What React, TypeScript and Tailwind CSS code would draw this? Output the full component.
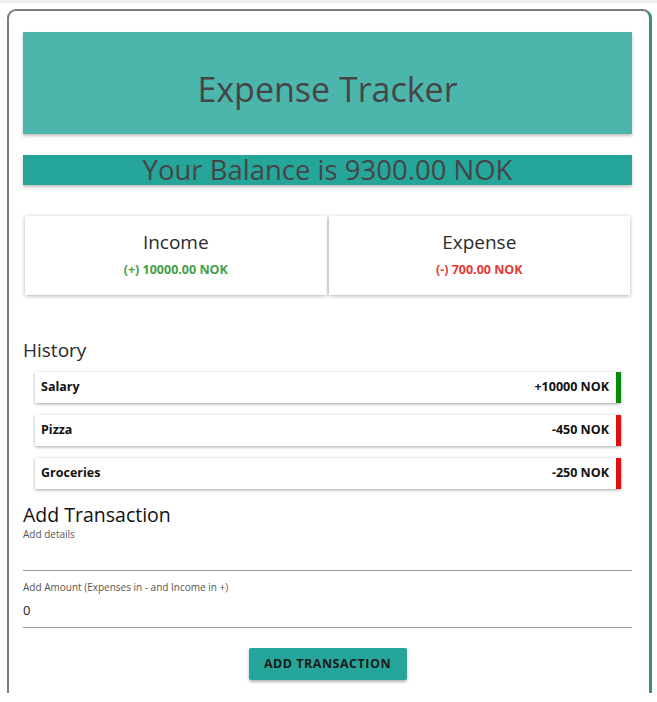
import React from "react";

const rows = [
  { name: "Salary", amount: "+10000 NOK", color: "border-r-[#0a8a0a]" },
  { name: "Pizza", amount: "-450 NOK", color: "border-r-[#e01010]" },
  { name: "Groceries", amount: "-250 NOK", color: "border-r-[#e01010]" },
];

export default function App() {
  return (
    <div className="w-[657px] h-[702px] bg-white overflow-hidden" style={{ fontFamily: '"Open Sans", "Noto Sans", sans-serif' }}>
      <div className="h-[3px] bg-[#eeeeee]" />
      <div className="ml-[7px] mt-[6px] w-[645px] h-[684px] rounded-t-[9px] border-l-2 border-t-2 border-r-[3px] border-l-[#7c7c7c] border-t-[#7c7c7c] border-r-[#3e8a86] pl-[14px] pr-[17px] pt-[21px]">
        <div className="h-[102px] bg-[#4db6ac] shadow-[0_2px_3px_rgba(0,0,0,0.25)] flex items-center justify-center">
          <h1 className="text-[34px] text-[#454545] leading-none mt-[12px]">Expense Tracker</h1>
        </div>
        <div className="mt-[21px] h-[30px] bg-[#26a69a] shadow-[0_2px_3px_rgba(0,0,0,0.25)] flex items-center justify-center">
          <h2 className="text-[27.5px] text-[#454545] leading-none">Your Balance is 9300.00 NOK</h2>
        </div>
        <div className="mt-[31px] mx-[2px] flex h-[79px]">
          <div className="flex-1 bg-white shadow-[0_1px_4px_rgba(0,0,0,0.3)] flex flex-col items-center pt-[13px]">
            <div className="text-[19px] text-[#2a2a2a] leading-[26px]">Income</div>
            <div className="mt-[6px] text-[12.5px] font-bold text-[#43a047] leading-[18px]">(+) 10000.00 NOK</div>
          </div>
          <div className="w-[2px]" />
          <div className="flex-1 bg-white shadow-[0_1px_4px_rgba(0,0,0,0.3)] flex flex-col items-center pt-[13px]">
            <div className="text-[19px] text-[#2a2a2a] leading-[26px]">Expense</div>
            <div className="mt-[6px] text-[12.5px] font-bold text-[#e53935] leading-[18px]">(-) 700.00 NOK</div>
          </div>
        </div>
        <div className="mt-[42px] text-[19px] text-[#2a2a2a] leading-[26px]">History</div>
        <div className="mt-[9px] ml-[12px] mr-[11px] flex flex-col gap-[12px]">
          {rows.map((r) => (
            <div key={r.name} className={`h-[31px] bg-white shadow-[0_1px_3px_rgba(0,0,0,0.35)] border-r-[5px] ${r.color} flex items-center justify-between pl-[6px] pr-[7px]`}>
              <span className="text-[12.5px] font-bold text-[#111]">{r.name}</span>
              <span className="text-[12.5px] font-bold text-[#111]">{r.amount}</span>
            </div>
          ))}
        </div>
        <div className="mt-[13px] text-[19.5px] text-[#111] leading-[26px]">Add Transaction</div>
        <div className="text-[10px] text-[#555] leading-[13px]">Add details</div>
        <div className="h-[30px] border-b border-b-[#9a9a9a]" />
        <div className="mt-[10px] text-[10px] text-[#555] leading-[13px]">Add Amount (Expenses in - and Income in +)</div>
        <div className="mt-[7px] text-[13px] text-[#222] leading-[18px] pb-[8px] border-b border-b-[#9a9a9a]">0</div>
        <div className="mt-[20px] flex justify-center">
          <button className="w-[158px] h-[32px] bg-[#26a69a] rounded-[2px] shadow-[0_2px_3px_rgba(0,0,0,0.3)] text-[12.5px] font-bold tracking-[0.5px] text-[#1a1a1a]">
            ADD TRANSACTION
          </button>
        </div>
      </div>
    </div>
  );
}
